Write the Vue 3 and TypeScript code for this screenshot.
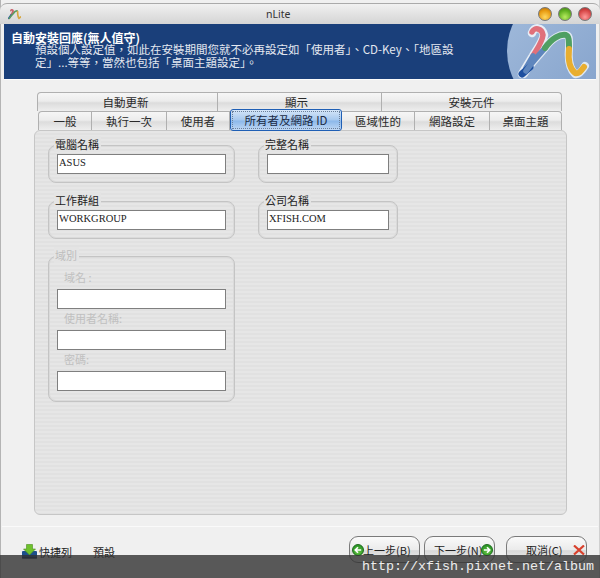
<script setup lang="ts">
interface Tab { label: string; width: number; active?: boolean }
const topTabs: Tab[] = [
  { label: '自動更新', width: 181 },
  { label: '顯示', width: 164 },
  { label: '安裝元件', width: 180 },
]
const tabs: Tab[] = [
  { label: '一般', width: 54 },
  { label: '執行一次', width: 75 },
  { label: '使用者', width: 63 },
  { label: '所有者及網路 ID', width: 112, active: true },
  { label: '區域性的', width: 73 },
  { label: '網路設定', width: 75 },
  { label: '桌面主題', width: 72 },
]
</script>

<template>
  <div class="window">
    <div class="titlebar">
      <svg class="app-icon" width="15" height="12" viewBox="0 0 80 54">
        <g fill="none" stroke-linecap="round" stroke-linejoin="round" stroke-width="9">
          <path d="M26 9 C28 2 36 3 38 11 C36 20 30 26 27 32" stroke="#c8606a" />
          <path d="M27 32 L15 50" stroke="#2a5aa0" />
          <path d="M18 50 C24 40 34 30 39 24 C46 14 54 10 60 11" stroke="#5a9a60" />
          <path d="M62 14 C62 35 63 44 69 50 L78 43" stroke="#d8a840" />
        </g>
      </svg>
      <span class="title">nLite</span>
      <div class="lights">
        <span class="light amber"></span>
        <span class="light green"></span>
        <span class="light red"></span>
      </div>
    </div>

    <div class="header">
      <div class="header-text">
        <div class="header-title">自動安裝回應(無人值守)</div>
        <div class="header-desc">預設個人設定值，如此在安裝期間您就不必再設定如「使用者」、CD-Key、「地區設<br />定」...等等，當然也包括「桌面主題設定」。</div>
      </div>
      <div class="logo">
        <svg width="90" height="55" viewBox="0 0 90 55">
          <defs>
            <linearGradient id="disc" x1="0" y1="0" x2="1" y2="1">
              <stop offset="0" stop-color="#a3bcdc" />
              <stop offset="1" stop-color="#7d9cc8" />
            </linearGradient>
          </defs>
          <circle cx="65" cy="27" r="64" fill="url(#disc)" />
          <g fill="none" stroke-linecap="round" stroke-linejoin="round">
            <path d="M26 9 C28 2 36 3 38 11 C36 20 30 26 27 32 L16 50" stroke="#e8eef6" stroke-width="8.5" />
            <path d="M18 50 C24 40 34 30 39 24 C46 14 54 10 60 11 C64 12 63 16 63 25 C62 35 63 44 69 50 C73 51 76 47 79 42" stroke="#dfe8f2" stroke-width="8" />
            <path d="M26 8 C28 3 36 4 37 11 C36 19 30 26 27 32" stroke="#e0707a" stroke-width="5.5" />
            <path d="M27 32 L20 44" stroke="#5f86bd" stroke-width="5.5" />
            <path d="M16 50 L24 43" stroke="#1d4f9f" stroke-width="7" />
            <path d="M20 47 C26 38 34 30 39 24" stroke="#5f86bd" stroke-width="5.5" />
            <path d="M39 24 C46 14 54 10 60 11 C63 12 63 17 63 24" stroke="#4f9f62" stroke-width="6" />
            <path d="M63 25 C62 35 63 44 69 49 C73 50 75 47 78 43" stroke="#e8ae30" stroke-width="6" />
          </g>
        </svg>
      </div>
    </div>

    <div class="content">
      <div class="tabs">
        <div class="tab-row top">
          <div
            v-for="t in topTabs"
            :key="t.label"
            class="tab"
            :style="{ width: t.width + 'px' }"
          >
            {{ t.label }}
          </div>
        </div>
        <div class="tab-row bottom">
          <div
            v-for="t in tabs"
            :key="t.label"
            class="tab"
            :class="{ active: t.active }"
            :style="{ width: t.width + 'px' }"
          >
            <span class="tab-label">{{ t.label }}</span>
          </div>
        </div>
      </div>

      <div class="panel">
        <div class="col-left">
          <div class="group">
            <span class="legend">電腦名稱</span>
            <div class="input">ASUS</div>
          </div>
          <div class="group">
            <span class="legend">工作群組</span>
            <div class="input">WORKGROUP</div>
          </div>
          <div class="group disabled">
            <span class="legend">域別</span>
            <div class="field-label first">域名 :</div>
            <div class="input"></div>
            <div class="field-label">使用者名稱:</div>
            <div class="input"></div>
            <div class="field-label">密碼:</div>
            <div class="input"></div>
          </div>
        </div>
        <div class="col-right">
          <div class="group">
            <span class="legend">完整名稱</span>
            <div class="input"></div>
          </div>
          <div class="group">
            <span class="legend">公司名稱</span>
            <div class="input">XFISH.COM</div>
          </div>
        </div>
      </div>
    </div>

    <div class="footer">
      <div class="footer-left">
        <svg class="dl-icon" width="15" height="15" viewBox="0 0 15 15">
          <rect x="0" y="7" width="15" height="7.5" rx="1" fill="#1c4f8c" />
          <rect x="0" y="13" width="15" height="1.5" fill="#0e2c55" />
          <path d="M4.5 0.5 H10.5 V5 H13.5 L7.5 11 L1.5 5 H4.5 Z" fill="#6fc22c" stroke="#4a8f1c" stroke-width="0.6" />
        </svg>
        <span class="footer-link first">快捷列</span>
        <span class="footer-link">預設</span>
      </div>
      <div class="buttons">
        <div class="btn back">
          <span class="btn-text">上一步(B)</span>
          <span class="round green-dot">
            <svg width="10" height="10" viewBox="0 0 11 11"><path d="M9 5.5 H3 M5.5 2.5 L2.5 5.5 L5.5 8.5" fill="none" stroke="#fff" stroke-width="1.8" /></svg>
          </span>
        </div>
        <div class="btn next">
          <span class="btn-text">下一步(N)</span>
          <span class="round green-dot">
            <svg width="10" height="10" viewBox="0 0 11 11"><path d="M2 5.5 H8 M5.5 2.5 L8.5 5.5 L5.5 8.5" fill="none" stroke="#fff" stroke-width="1.8" /></svg>
          </span>
        </div>
        <div class="btn cancel">
          <span class="btn-text">取消(C)</span>
          <svg class="x-icon" width="12" height="10" viewBox="0 0 12 10"><path d="M1 0.5 L11 9.5 M11 0.5 L1 9.5" stroke="#d8402c" stroke-width="2.2" /></svg>
        </div>
      </div>
    </div>

    <div class="watermark">http://xfish.pixnet.net/album</div>
  </div>
</template>

<style>
html, body { margin: 0; background: #fff; }
</style>

<style scoped>
.window {
  position: relative;
  width: 600px;
  height: 578px;
  box-sizing: border-box;
  padding-top: 3px;
  overflow: hidden;
  display: flex;
  flex-direction: column;
  background: #f0f0f0;
  font-family: "Noto Sans CJK TC", "Liberation Sans", sans-serif;
  font-size: 12px;
  color: #222;
  box-shadow: inset 1px 0 #b4b4b4, inset -1px 0 #d0d0d0;
}
.titlebar {
  position: relative;
  height: 21px;
  flex: none;
  display: flex;
  align-items: center;
  padding: 0 8px 0 6px;
  background: linear-gradient(#f1f1f1, #d4d4d4);
  border-top: 1px solid #aaa;
  border-radius: 7px 7px 0 0;
  box-sizing: border-box;
}
.title {
  position: absolute;
  left: 266px;
  top: 3px;
  font-family: "Noto Sans", sans-serif;
  font-size: 10.5px;
  line-height: 15px;
  color: #333;
}
.lights { margin-left: auto; display: flex; gap: 6px; }
.light {
  width: 14px;
  height: 14px;
  border-radius: 50%;
  box-sizing: border-box;
  border: 1px solid #777;
}
.amber { background: radial-gradient(circle at 50% 75%, #ffd860, #e89a10 60%, #a86a10); }
.green { background: radial-gradient(circle at 50% 75%, #b8ec60, #60b020 60%, #3e8018); }
.red { background: radial-gradient(circle at 50% 75%, #ff9a9a, #d84848 60%, #a02828); }

.header {
  flex: none;
  height: 55px;
  margin: 0 4px;
  display: flex;
  justify-content: space-between;
  background: #1a3f7a;
  overflow: hidden;
  color: #fff;
  box-shadow: 0 1px #fbfbfb;
}
.header-text { padding: 8px 0 0 7px; }
.header-title { font-weight: 700; font-size: 12px; line-height: 11px; }
.header-desc {
  margin-left: 24px;
  font-size: 11.5px;
  line-height: 13px;
  color: #e4e8f0;
  white-space: nowrap;
}
.logo { flex: none; width: 90px; height: 55px; }

.content { flex: none; padding: 13px 33px 0 34px; }
.tabs { padding: 0 0 0 3px; }
.tab-row { display: flex; height: 19px; }
.tab-row.bottom { margin-left: 1px; }
.tab {
  position: relative;
  box-sizing: border-box;
  display: flex;
  align-items: center;
  justify-content: center;
  font-size: 11.5px;
  line-height: 18px;
  background: linear-gradient(#f6f6f6 0, #ececec 45%, #dcdcdc 55%, #eeeeee 100%);
  border: 1px solid #b0b0b0;
  border-width: 1px 1px 0 0;
  color: #2a2a2a;
}
.tab:first-child { border-left: 1px solid #b0b0b0; border-top-left-radius: 4px; }
.tab:last-child { border-top-right-radius: 4px; }
.top .tab:nth-child(1) { padding-right: 4px; }
.top .tab:nth-child(2) { padding-right: 6px; }
.tab.active {
  z-index: 1;
  height: 22px;
  margin-top: -2px;
  background: linear-gradient(#d6e6f8, #a6c8ee 50%, #8cb8ea 55%, #c0d8f4);
  border: 1px solid #1f5fb5;
  border-radius: 3px;
  color: #1a2a44;
}
.tab.active .tab-label {
  box-sizing: border-box;
  width: 108px;
  height: 18px;
  text-align: center;
  line-height: 16px;
  border: 1px dotted #6a7f9a;
}

.panel {
  position: relative;
  height: 385px;
  box-sizing: border-box;
  padding: 14px 13px 0;
  display: flex;
  gap: 23px;
  border: 1px solid #c6c6c6;
  border-radius: 6px;
  background: repeating-linear-gradient(#e6e6e6 0 2px, #e1e1e1 2px 4px);
}
.col-left { width: 187px; display: flex; flex-direction: column; gap: 18px; }
.col-right { width: 140px; display: flex; flex-direction: column; gap: 18px; }
.group {
  position: relative;
  box-sizing: border-box;
  height: 38px;
  padding: 8px;
  border: 1px solid #c4c4c4;
  border-radius: 8px;
  box-shadow: inset 0 0 0 1px #dadada;
}
.legend {
  position: absolute;
  left: 5px;
  top: -10px;
  padding: 0 2px 0 1px;
  font-size: 11px;
  line-height: 16px;
  color: #222;
  background: #e4e4e4;
}
.input {
  box-sizing: border-box;
  height: 20px;
  padding: 0 1px;
  background: #fff;
  border: 1px solid #7f7f7f;
  font-family: "Liberation Serif", serif;
  font-size: 10.5px;
  line-height: 15px;
  color: #222;
}
.group.disabled { height: 146px; padding-top: 0; margin-top: -1px; }
.disabled .legend { color: #bdbdbd; }
.field-label {
  height: 21px;
  padding-left: 7px;
  font-size: 11px;
  line-height: 19px;
  color: #c0c0c0;
}
.field-label.first { height: 32px; padding-top: 12px; box-sizing: border-box; line-height: 16px; }

.footer {
  flex: none;
  height: 63px;
  box-sizing: border-box;
  padding: 21px 13px 0 22px;
  display: flex;
  justify-content: space-between;
  align-items: flex-start;
  position: relative;
}
.footer::before {
  content: "";
  position: absolute;
  left: 2px;
  right: 2px;
  top: 11px;
  height: 1px;
  background: #fafafa;
}
.footer-left { display: flex; align-items: center; height: 31px; }
.dl-icon { flex: none; }
.footer-link { font-size: 11px; margin-left: 21px; color: #222; }
.footer-link.first { margin-left: 2px; }
.buttons { display: flex; }
.btn {
  position: relative;
  box-sizing: border-box;
  height: 27px;
  display: flex;
  align-items: center;
  border: 1.5px solid #7a7a7a;
  border-radius: 9px;
  background: linear-gradient(#fafafa, #ebebeb 50%, #d8d8d8 55%, #eeeeee);
  font-size: 11px;
  color: #222;
}
.back { width: 71px; margin-right: 4px; padding-left: 13px; }
.next { width: 71px; margin-right: 11px; padding-left: 9px; }
.cancel { width: 81px; padding-left: 19px; }
.btn-text { white-space: nowrap; }
.round {
  position: absolute;
  top: 7px;
  width: 12px;
  height: 12px;
  box-sizing: border-box;
  border-radius: 50%;
  display: flex;
  align-items: center;
  justify-content: center;
}
.back .round { left: 2px; }
.next .round { right: 1px; }
.green-dot { background: radial-gradient(circle at 50% 70%, #60c040, #1e8a20); border: 1px solid #1a6a1a; }
.x-icon { position: absolute; right: 1px; top: 8px; }

.watermark {
  position: absolute;
  left: 0;
  right: 0;
  bottom: 0;
  height: 23px;
  box-sizing: border-box;
  padding-right: 6px;
  text-align: right;
  background: rgba(50, 50, 50, 0.8);
  font-family: "Liberation Mono", monospace;
  font-size: 13.33px;
  line-height: 23px;
  color: #ededed;
}
</style>
